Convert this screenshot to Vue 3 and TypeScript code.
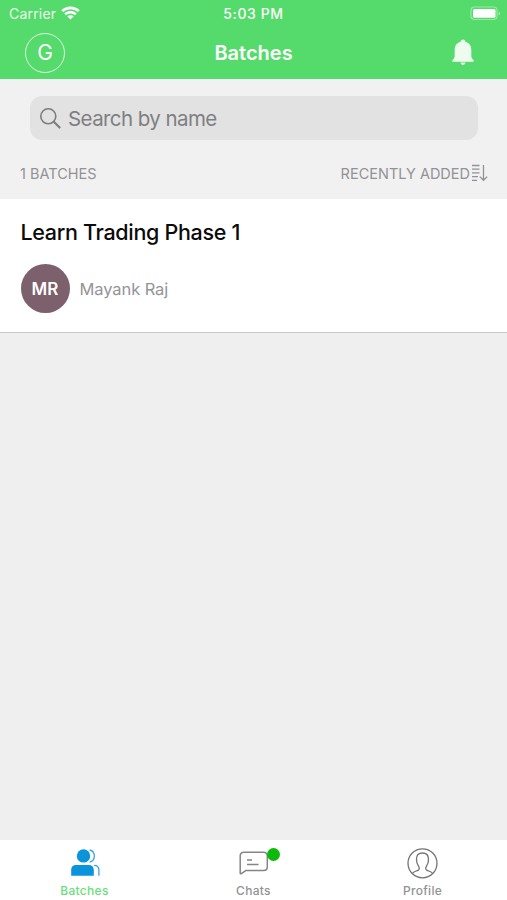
<script setup lang="ts">
import { ref, computed } from 'vue'

interface Batch {
  title: string
  owner: string
  initials: string
}

type Tab = 'Batches' | 'Chats' | 'Profile'

const tabs: Tab[] = ['Batches', 'Chats', 'Profile']
const activeTab = ref<Tab>('Batches')
const query = ref('')
const batches = ref<Batch[]>([
  { title: 'Learn Trading Phase 1', owner: 'Mayank Raj', initials: 'MR' },
])
const visible = computed(() =>
  batches.value.filter((b) => b.title.toLowerCase().includes(query.value.toLowerCase())),
)
</script>

<template>
  <div class="screen">
    <header class="header">
      <div class="status">
        <div class="carrier">
          <span class="carrier-name">Carrier</span>
          <svg class="wifi" width="19" height="14" viewBox="0 0 20 14">
            <g fill="none" stroke="#fff" stroke-width="2.7">
              <path d="M1.3 5.1C6 .4 14 .4 18.7 5.1" />
              <path d="M4.4 8.3c3.1-3 8.1-3 11.2 0" />
            </g>
            <path d="M10 13.8 6.600 10.500c1.800-1.600 5-1.600 6.800 0z" fill="#fff" />
          </svg>
        </div>
        <span class="time">5:03 PM</span>
        <div class="battery-wrap">
          <svg width="31" height="15" viewBox="0 0 31 15">
            <rect x="1" y="1" width="26" height="12.5" rx="3.5" fill="none" stroke="#fff" stroke-opacity=".4" stroke-width="1.2" />
            <rect x="3" y="3" width="22.500" height="8.700" rx="1.500" fill="#fff" />
            <path d="M28.600 5.500c2 .8 2 3 0 3.800z" fill="#fff" fill-opacity=".5" />
          </svg>
        </div>
      </div>
      <div class="nav">
        <div class="nav-side"><button class="account">G</button></div>
        <h1 class="nav-title">Batches</h1>
        <div class="nav-side end">
          <svg width="22" height="27" viewBox="0 0 22 27" fill="#fff" fill-opacity=".9">
            <path d="M11 .5c1.400 0 2.300.9 2.300 2.300 4.100 1 6 4.200 6 8.200v5.300c0 2.300.4 3.500 2.300 4.800v1.600H.4v-1.600c1.900-1.300 2.300-2.500 2.300-4.800V11c0-4 1.900-7.200 6-8.200C8.700 1.400 9.600.5 11 .5z" />
            <path d="M8.600 23.500h4.800c-.2 1.600-1.100 2.500-2.400 2.500s-2.200-.9-2.400-2.500z" />
          </svg>
        </div>
      </div>
    </header>

    <section class="tools">
      <label class="search">
        <svg width="21" height="21" viewBox="0 0 21 21" fill="none" stroke="#7d7d80">
          <circle cx="8.300" cy="8.300" r="7.500" stroke-width="1.600" />
          <path d="m13.800 13.800 5.800 5.800" stroke-width="2.100" stroke-linecap="round" />
        </svg>
        <input v-model="query" type="text" placeholder="Search by name" />
      </label>
      <div class="summary">
        <span class="count">{{ visible.length }} BATCHES</span>
        <div class="sort">
          <span class="sort-label">RECENTLY ADDED</span>
          <svg width="17" height="18" viewBox="0 0 17 18" fill="none" stroke="#929295" stroke-width="1.300">
            <path d="M1 1.500h7.500M1 5.200h7.500M1 8.900h7.500M1 12.600h6M1 16.300h5M12.500 1v15M8.800 12.600l3.700 3.700 3.700-3.700" />
          </svg>
        </div>
      </div>
    </section>

    <main class="list">
      <article v-for="batch in visible" :key="batch.title" class="batch">
        <h2 class="batch-title">{{ batch.title }}</h2>
        <div class="owner">
          <div class="avatar">{{ batch.initials }}</div>
          <span class="owner-name">{{ batch.owner }}</span>
        </div>
      </article>
    </main>

    <nav class="tabs">
      <button
        v-for="tab in tabs"
        :key="tab"
        class="tab"
        :class="{ active: activeTab === tab }"
        @click="activeTab = tab"
      >
        <span class="tab-icon">
          <svg v-if="tab === 'Batches'" width="30" height="28" viewBox="0 0 30 28">
            <circle cx="13.500" cy="6.900" r="6.700" fill="#0b93dc" />
            <path d="M1.200 26.700v-5.500c0-3.600 1.700-5.300 5.300-5.300h12c3.500 0 5.300 1.700 5.300 5.300v5.500z" fill="#0b93dc" />
            <path d="M19.600 1c6.300 1.200 6.300 11 0 12.200M24 16.400c3.400 0 4.900 1.700 4.900 4.900v5.400" fill="none" stroke="#3ba5df" stroke-width="1.300" />
          </svg>
          <svg v-else-if="tab === 'Chats'" width="30" height="28" viewBox="0 0 30 28" fill="none" stroke="#858588" stroke-width="1.500">
            <path d="M1.200 24.300V7c0-2.500 1.300-3.800 3.800-3.800h19.500c2.500 0 3.800 1.300 3.800 3.800v10.800c0 2.500-1.300 3.800-3.800 3.800H6.700L1.900 24.800z" stroke-linejoin="round" />
            <path d="M8 10.900h5M8 15.500h11.500" />
          </svg>
          <svg v-else width="32" height="32" viewBox="0 0 32 32" fill="none" stroke="#737376" stroke-width="1.300">
            <circle cx="15.500" cy="16.300" r="14.500" />
            <path d="M5.300 26.500c1.300-2 4-2.300 6-3.400 1.100-.6 1.300-2.400.3-3.800-1.600-2.200-2.100-4.300-2.100-6.900 0-4.400 2-6.400 6-6.400s6 2 6 6.400c0 2.600-.5 4.700-2.100 6.900-1 1.400-.8 3.200.3 3.800 2 1.100 4.700 1.400 6 3.400" />
          </svg>
          <i v-if="tab === 'Chats'" class="unread"></i>
        </span>
        <span class="tab-label">{{ tab }}</span>
      </button>
    </nav>
  </div>
</template>

<style>
body {
  margin: 0;
  background: #efefef;
}
</style>

<style scoped>
.screen {
  display: flex;
  flex-direction: column;
  height: 900px;
  background: #efefef;
  font-family: Inter, "Liberation Sans", sans-serif;
}
button {
  padding: 0;
  border: 0;
  background: none;
  font-family: inherit;
}
.header {
  box-sizing: border-box;
  height: 79px;
  background: #55db6b;
  color: #fff;
}
.status {
  display: grid;
  grid-template-columns: 1fr auto 1fr;
  align-items: center;
  height: 27px;
  padding: 0 6px;
}
.carrier {
  display: flex;
  align-items: center;
  gap: 5px;
  padding-left: 3px;
}
.carrier-name {
  font-size: 14px;
  line-height: 27px;
  letter-spacing: 0.2px;
  opacity: 0.9;
}
.wifi {
  margin-top: -1px;
}
.time {
  font-size: 14px;
  font-weight: 500;
  line-height: 27px;
  letter-spacing: 0.6px;
}
.battery-wrap {
  display: flex;
  justify-content: flex-end;
}
.nav {
  display: grid;
  grid-template-columns: 1fr auto 1fr;
  align-items: center;
  height: 51px;
  padding: 0 33px;
}
.nav-side {
  display: flex;
  margin-left: -8px;
}
.nav-side.end {
  justify-content: flex-end;
  margin-left: 0;
}
.account {
  box-sizing: border-box;
  width: 40px;
  height: 40px;
  border: 1.5px solid rgba(255, 255, 255, 0.8);
  border-radius: 50%;
  color: #fff;
  font-size: 21px;
}
.nav-title {
  margin: 0;
  font-size: 20px;
  font-weight: 600;
  line-height: 28px;
}
.tools {
  display: flex;
  flex-direction: column;
  box-sizing: border-box;
  height: 120px;
  padding-top: 17px;
  background: #f1f1f1;
}
.search {
  display: flex;
  align-items: center;
  gap: 7px;
  box-sizing: border-box;
  height: 44px;
  margin: 0 29px 0 30px;
  padding: 0 10px;
  border-radius: 12px;
  background: #e2e2e2;
}
.search input {
  flex: 1;
  min-width: 0;
  padding: 2px 0 0;
  border: 0;
  outline: 0;
  background: none;
  color: #333;
  font: 400 20.5px/28px Inter, "Liberation Sans", sans-serif;
  letter-spacing: -0.58px;
}
.search input::placeholder {
  color: #7f7f82;
  opacity: 1;
}
.summary {
  display: flex;
  align-items: center;
  justify-content: space-between;
  height: 24px;
  margin-top: 21px;
  padding: 0 19px 0 20px;
  color: #929295;
  font-size: 14.5px;
}
.sort {
  display: flex;
  align-items: center;
  gap: 1px;
}
.batch {
  display: flex;
  flex-direction: column;
  box-sizing: border-box;
  height: 134px;
  padding: 19px 20.5px 0;
  border-bottom: 1.5px solid #c9c9c9;
  background: #fff;
}
.batch-title {
  margin: 0;
  color: #0b0b0b;
  font-size: 21.5px;
  font-weight: 500;
  line-height: 28px;
  letter-spacing: -0.32px;
}
.owner {
  display: flex;
  align-items: center;
  gap: 10px;
  margin-top: 18px;
}
.avatar {
  display: flex;
  align-items: center;
  justify-content: center;
  width: 49px;
  height: 49px;
  border-radius: 50%;
  background: #7c606c;
  color: #fff;
  font-size: 17px;
  font-weight: 600;
}
.owner-name {
  color: #949497;
  font-size: 16.5px;
  letter-spacing: -0.1px;
}
.tabs {
  display: grid;
  grid-template-columns: repeat(3, 1fr);
  height: 60px;
  margin-top: auto;
  background: #fff;
}
.tab {
  display: flex;
  flex-direction: column;
  align-items: center;
  padding-top: 7px;
  color: #929295;
}
.tab-icon {
  position: relative;
  display: flex;
  align-items: center;
  justify-content: center;
  height: 32px;
}
.unread {
  position: absolute;
  top: 1px;
  right: -11px;
  width: 13px;
  height: 13px;
  border-radius: 50%;
  background: #0cba0c;
}
.tab-label {
  margin-top: 4px;
  font-size: 12px;
  font-weight: 500;
  line-height: 16px;
  letter-spacing: 0.3px;
}
.active {
  color: #6bde7e;
}
</style>
